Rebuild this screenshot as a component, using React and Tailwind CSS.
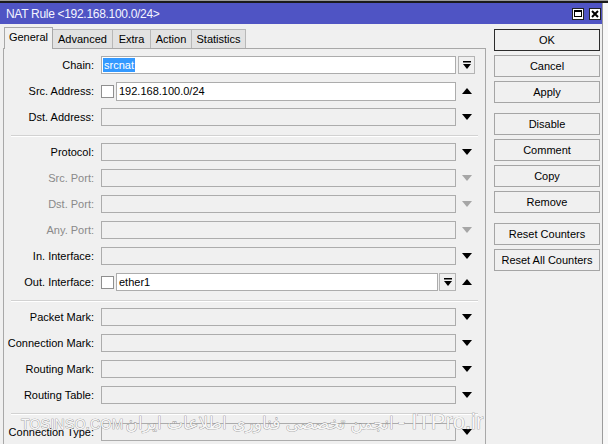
import React from 'react';

const DownArrow = ({ muted }) => (
  <svg width="10" height="6" viewBox="0 0 10 6">
    <polygon points="0,0 10,0 5,6" fill={muted ? '#a6a6a6' : '#000'} />
  </svg>
);

const UpArrow = () => (
  <svg width="10" height="6" viewBox="0 0 10 6">
    <polygon points="0,6 10,6 5,0" fill="#000" />
  </svg>
);

const DropButton = () => (
  <div className="w-[17px] h-[18px] border border-[#b4b4b4] bg-[#f0f0f0] flex items-center justify-center">
    <svg width="8" height="8" viewBox="0 0 8 8">
      <rect x="0" y="0" width="8" height="1.5" fill="#000" />
      <polygon points="0,3 8,3 4,8" fill="#000" />
    </svg>
  </div>
);

const Checkbox = () => (
  <div className="w-[13px] h-[13px] border border-[#8f8f8f] bg-white shrink-0" />
);

function Row({ label, muted, children, arrow }) {
  return (
    <div className="flex items-center h-[18px]">
      <div className={`w-[90px] text-right whitespace-nowrap ${muted ? 'text-[#8a8a8a]' : 'text-black'}`}>
        {label}
      </div>
      <div className="ml-[7px] w-[355px] h-[18px] flex items-center">
        {children || <div className="w-full h-[18px] border border-[#acacac] bg-[#f0f0f0]" />}
      </div>
      <div className="w-[19px] flex items-center justify-center ml-[1px]">{arrow}</div>
    </div>
  );
}

const Separator = () => (
  <div className="mt-[9px] mb-[6px] mx-[7px]">
    <div className="h-px bg-[#d2d2d2]" />
    <div className="h-px bg-white" />
  </div>
);

const tabs = [
  { name: 'General', w: 'w-[49px]' },
  { name: 'Advanced', w: 'w-[60px]' },
  { name: 'Extra', w: 'w-[38px]' },
  { name: 'Action', w: 'w-[41px]' },
  { name: 'Statistics', w: 'w-[54px]' },
];

function Btn({ children, primary }) {
  return (
    <div
      className={`h-[22px] flex items-center justify-center border bg-[#f0f0f0] ${
        primary ? 'border-[#2b2b2b]' : 'border-[#a5a5a5]'
      }`}
    >
      {children}
    </div>
  );
}

export default function App() {
  return (
    <div className="w-[608px] h-[444px] overflow-hidden relative bg-[#f8f8f8] font-['Liberation_Sans',Arial,sans-serif] text-[11px] text-black">
      <div className="h-[1px] bg-[#9a9a9a]" />
      <div className="h-[2px] bg-[#1b1b1b]" />
      <div className="w-[603px] h-[441px] border-r border-[#9c9c9c] bg-[#f0f0f0] flex flex-col">
        {/* title bar */}
        <div className="h-[21px] bg-[#4f54c4] flex items-center pl-[6px] pr-[1px] shrink-0">
          <span className="text-[12px] tracking-[-0.3px] text-[#f4f4ff]">NAT Rule &lt;192.168.100.0/24&gt;</span>
          <div className="ml-auto flex items-center gap-[5px]">
            <div className="w-[12px] h-[12px] bg-white border border-[#222] flex items-center justify-center">
              <div className="w-[8px] h-[7px] border border-black border-t-2" />
            </div>
            <div className="w-[12px] h-[12px] bg-white border border-[#222] flex items-center justify-center">
              <svg width="8" height="8" viewBox="0 0 8 8">
                <path d="M1 1 L7 7 M7 1 L1 7" stroke="#000" strokeWidth="2" />
              </svg>
            </div>
          </div>
        </div>

        <div className="flex flex-1">
          {/* left: tabs + panel */}
          <div className="w-[486px] pl-[3px] pt-[2px] flex flex-col">
            <div className="flex items-end pl-[1px] h-[22px]">
              {tabs.map((t, i) =>
                i === 0 ? (
                  <div
                    key={t.name}
                    className={`${t.w} h-[22px] -mb-px relative z-10 border-t border-l border-r border-[#a8a8a8] bg-[#f0f0f0] flex items-center justify-center pb-[2px]`}
                  >
                    {t.name}
                  </div>
                ) : (
                  <div
                    key={t.name}
                    className={`${t.w} h-[19px] border-t border-r border-[#b8b8b8] bg-[#e2e2e2] flex items-center justify-center`}
                  >
                    {t.name}
                  </div>
                )
              )}
            </div>
            <div className="flex-1 border-t border-l border-r border-[#a8a8a8] pt-[7px]">
              <div className="flex flex-col gap-[8px]">
                <Row label="Chain:" arrow={<DropButton />}>
                  <div className="w-full h-[18px] border border-[#acacac] bg-white flex items-center pl-[1px]">
                    <span className="bg-[#3399ff] text-white h-[14px] leading-[14px] px-[1px]">srcnat</span>
                  </div>
                </Row>
                <Row label="Src. Address:" arrow={<UpArrow />}>
                  <Checkbox />
                  <div className="ml-[2px] flex-1 h-[19px] border border-[#acacac] bg-white flex items-center pl-[2px]">
                    192.168.100.0/24
                  </div>
                </Row>
                <Row label="Dst. Address:" arrow={<DownArrow />} />
              </div>
              <Separator />
              <div className="flex flex-col gap-[8px]">
                <Row label="Protocol:" arrow={<DownArrow />} />
                <Row label="Src. Port:" muted arrow={<DownArrow muted />} />
                <Row label="Dst. Port:" muted arrow={<DownArrow muted />} />
                <Row label="Any. Port:" muted arrow={<DownArrow muted />} />
                <Row label="In. Interface:" arrow={<DownArrow />} />
                <Row label="Out. Interface:" arrow={<UpArrow />}>
                  <Checkbox />
                  <div className="ml-[2px] flex-1 h-[18px] border border-[#acacac] bg-white flex items-center pl-[2px]">
                    ether1
                  </div>
                  <div className="ml-[1px]">
                    <DropButton />
                  </div>
                </Row>
              </div>
              <Separator />
              <div className="flex flex-col gap-[8px]">
                <Row label="Packet Mark:" arrow={<DownArrow />} />
                <Row label="Connection Mark:" arrow={<DownArrow />} />
                <Row label="Routing Mark:" arrow={<DownArrow />} />
                <Row label="Routing Table:" arrow={<DownArrow />} />
              </div>
              <Separator />
              <div className="flex flex-col gap-[8px] pt-[2px]">
                <Row label="Connection Type:" arrow={<DownArrow />} />
              </div>
            </div>
          </div>

          {/* right: buttons */}
          <div className="w-[106px] ml-[8px] pt-[5px] flex flex-col">
            <div className="flex flex-col gap-[4px]">
              <Btn primary>OK</Btn>
              <Btn>Cancel</Btn>
              <Btn>Apply</Btn>
            </div>
            <div className="flex flex-col gap-[4px] mt-[10px]">
              <Btn>Disable</Btn>
              <Btn>Comment</Btn>
              <Btn>Copy</Btn>
              <Btn>Remove</Btn>
            </div>
            <div className="flex flex-col gap-[4px] mt-[10px]">
              <Btn>Reset Counters</Btn>
              <Btn>Reset All Counters</Btn>
            </div>
          </div>
        </div>
      </div>

      {/* watermark */}
      <div className="absolute left-[21px] top-[405px] flex items-baseline whitespace-nowrap text-[#f7f7f7] [-webkit-text-stroke:0.7px_#858585] [paint-order:stroke_fill]">
        <span className="text-[14px] tracking-[0.3px] font-['Liberation_Sans',Arial,sans-serif]">TOSINSO.COM</span>
        <span dir="rtl" className="text-[17px] font-['DejaVu_Sans',sans-serif] ml-[2px]">
          انجمن تخصصی فناوری اطلاعات ایران
        </span>
        <span className="text-[22px] font-['Liberation_Sans',Arial,sans-serif] ml-[4px]">- ITPro.ir</span>
      </div>
    </div>
  );
}
